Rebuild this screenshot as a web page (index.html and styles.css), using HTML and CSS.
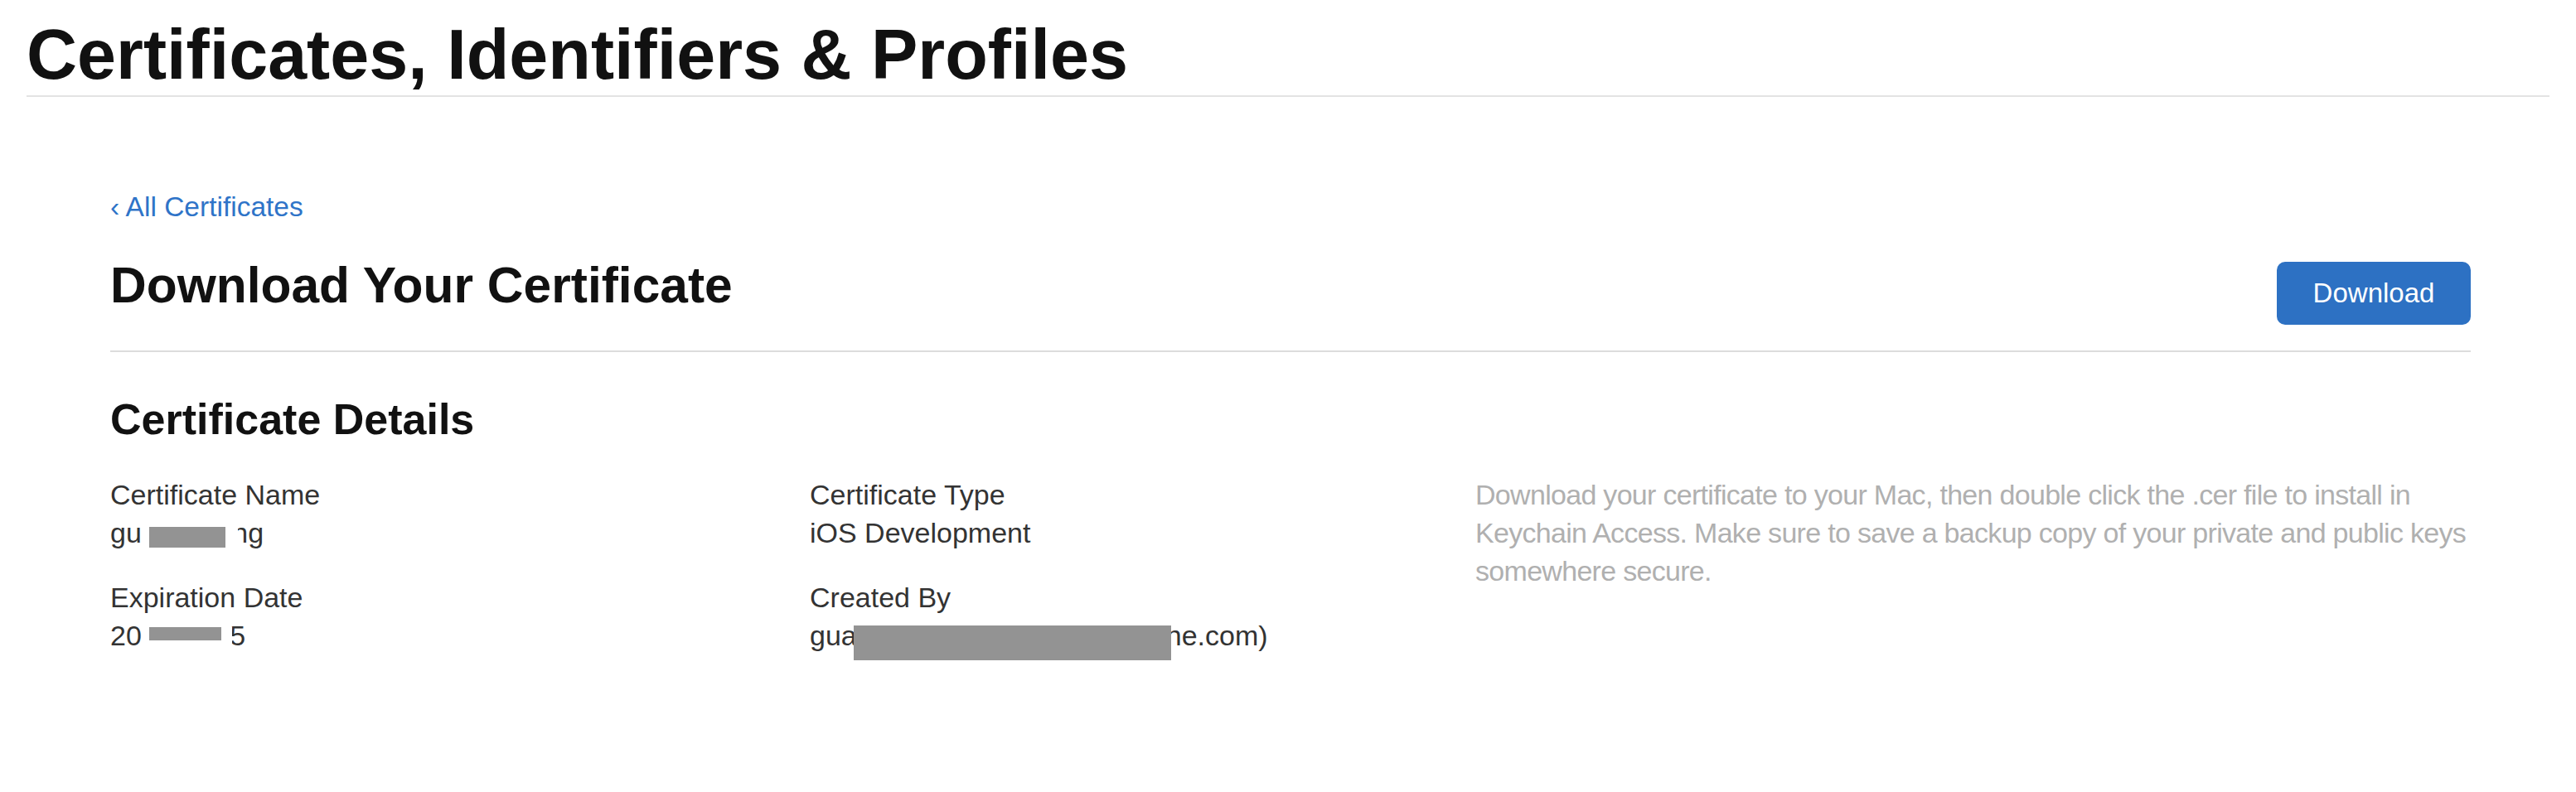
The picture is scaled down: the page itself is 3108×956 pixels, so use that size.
FILE: index.html
```html
<!DOCTYPE html>
<html lang="en">
<head>
<meta charset="utf-8">
<title>Certificates, Identifiers &amp; Profiles</title>
<link rel="stylesheet" href="styles.css">
</head>
<body>
<header class="page-header">
  <h1 class="page-title">Certificates, Identifiers &amp; Profiles</h1>
</header>
<main class="content">
  <div class="back-row"><a class="back-link" href="#"><span class="chev">‹</span> All Certificates</a></div>
  <div class="title-row">
    <h2 class="section-title">Download Your Certificate</h2>
    <button class="btn-download" type="button">Download</button>
  </div>
  <section class="details">
    <h3 class="details-title">Certificate Details</h3>
    <div class="details-grid">
      <div class="col">
        <div class="field">
          <div class="label">Certificate Name</div>
          <div class="value">gu <span class="redact redact-name"></span>ng</div>
        </div>
        <div class="field">
          <div class="label">Expiration Date</div>
          <div class="value">20 <span class="redact redact-date"></span>5</div>
        </div>
      </div>
      <div class="col">
        <div class="field">
          <div class="label">Certificate Type</div>
          <div class="value">iOS Development</div>
        </div>
        <div class="field">
          <div class="label">Created By</div>
          <div class="value">gua<span class="redact redact-email"></span>ne.com)</div>
        </div>
      </div>
      <p class="note">Download your certificate to your Mac, then double click the .cer file to install in Keychain Access. Make sure to save a backup copy of your private and public keys somewhere secure.</p>
    </div>
  </section>
</main>
</body>
</html>
```
FILE: styles.css
```css
* { box-sizing: border-box; }

body {
  margin: 0;
  background: #fff;
  color: #333;
  font-family: "Liberation Sans", Arial, sans-serif;
}

.page-header {
  margin: 0 32px;
  padding-top: 18px;
  border-bottom: 2px solid #e3e3e3;
}

.page-title {
  margin: 0;
  font-size: 84.5px;
  line-height: 97px;
  font-weight: 700;
  color: #111;
}

.content {
  padding: 0 127px 0 133px;
}

.back-row {
  margin-top: 110px;
  font-size: 33.5px;
  line-height: 46px;
}

.back-link {
  color: #2f74c8;
  text-decoration: none;
}

.title-row {
  display: flex;
  justify-content: space-between;
  align-items: flex-start;
  margin-top: 35px;
  padding-bottom: 31px;
  border-bottom: 2px solid #dcdcdc;
}

.section-title {
  margin: 0;
  font-size: 60.5px;
  line-height: 72px;
  font-weight: 700;
  color: #111;
}

.btn-download {
  margin-top: 8px;
  width: 234px;
  height: 76px;
  border: 0;
  border-radius: 10px;
  background: #2d71c3;
  color: #fff;
  font-family: inherit;
  font-size: 33px;
  cursor: pointer;
}

.details-title {
  margin: 51px 0 0;
  font-size: 52px;
  line-height: 61px;
  font-weight: 700;
  color: #111;
}

.details-grid {
  display: grid;
  grid-template-columns: 844px 803px 1fr;
  margin-top: 37px;
}

.field + .field {
  margin-top: 32px;
}

.label,
.value {
  font-size: 34px;
  line-height: 46px;
  color: #333;
}

.note {
  margin: 0;
  font-size: 34px;
  line-height: 46px;
  letter-spacing: -0.7px;
  color: #b0b0b0;
}

.redact {
  display: inline-block;
  position: relative;
}

.redact-name {
  width: 107px;
  height: 25px;
  vertical-align: -6px;
  background: linear-gradient(90deg, #939393 92px, #fff 92px);
  margin-right: -7px;
}

.redact-date {
  width: 100px;
  height: 24px;
  vertical-align: -2px;
  background: linear-gradient(#939393, #939393) 0 0 / 87px 16px no-repeat, #fff;
  margin-right: -3px;
}

.redact-email {
  width: 383px;
  height: 42px;
  vertical-align: -18px;
  background: #939393;
  margin-left: -4px;
  margin-right: -6px;
}
```
